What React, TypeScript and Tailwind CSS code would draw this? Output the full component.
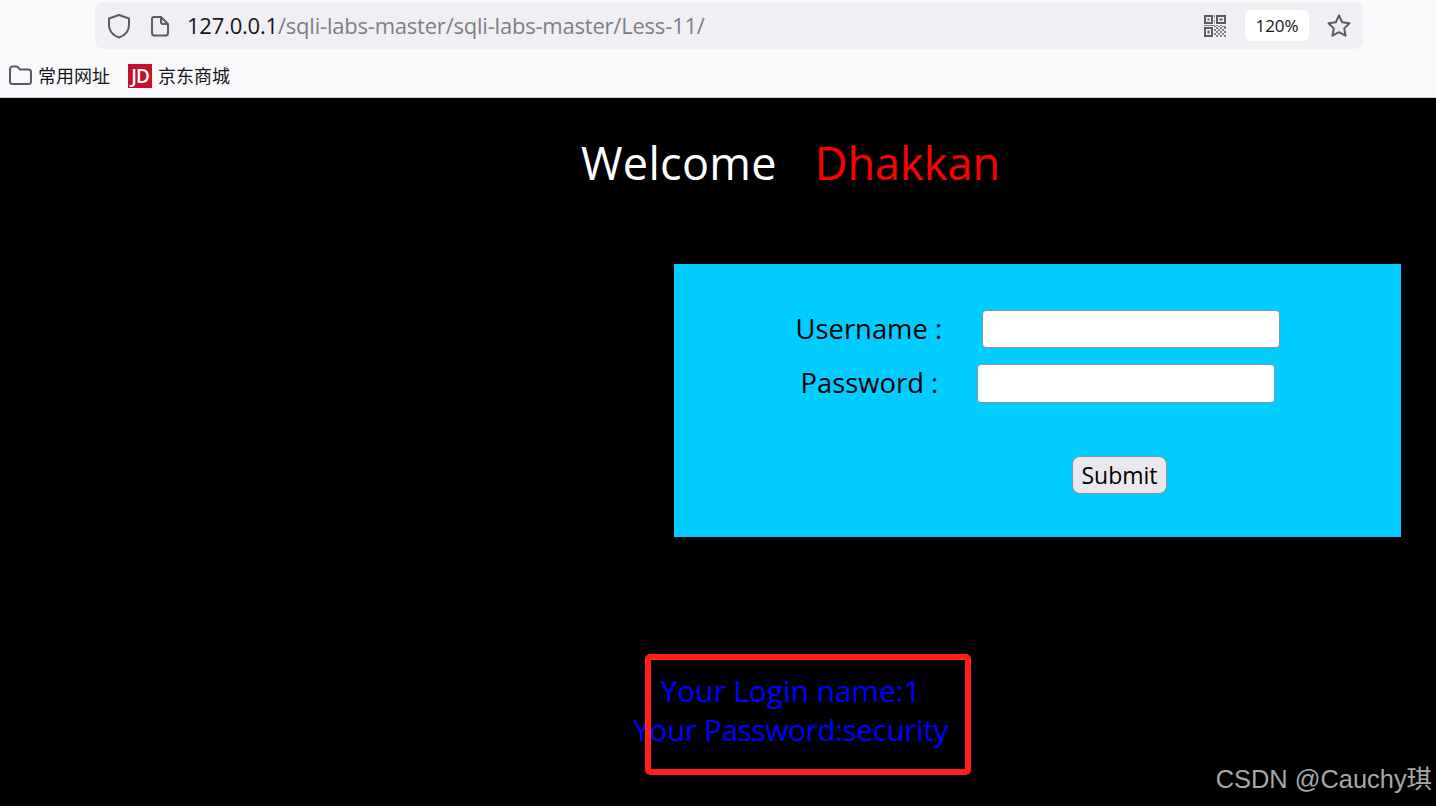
import React from 'react';

const uiFont = "font-['Open_Sans','Noto_Sans_CJK_SC',sans-serif]";

const QrIcon = () => (
  <svg width="22" height="22" viewBox="0 0 22 22" fill="#5b5b66">
    <path fillRule="evenodd" d="M0 0h9v9H0zM2 2v5h5V2zM12 0h10v9H12zM14 2v5h6V2zM0 12h9v10H0zM2 14v6h5v-6z" />
    <rect x="3.5" y="3.5" width="2" height="2" />
    <rect x="15.5" y="3.5" width="3" height="2" />
    <rect x="3.5" y="15.5" width="2" height="3" />
    <path d="M10 0h1v3h-1zM10 5h1v5H0v1h10v1h2v-2h2v2h2v-2h2v2h4v-1h-11zM12 12h2v2h-2zM16 12h2v2h-2zM20 12h2v2h-2zM14 14h2v2h-2zM18 14h2v2h-2zM12 16h2v2h-2zM16 16h2v2h-2zM20 16h2v2h-2zM10 14h2v2h-2zM10 18h2v2h-2zM14 18h2v2h-2zM18 18h2v2h-2zM12 20h2v2h-2zM16 20h2v2h-2zM20 20h2v2h-2z" opacity="0.75" />
  </svg>
);

const Toolbar = () => (
  <div className={`h-[98px] bg-[#f9f9fb] border-b border-[#c8c8c8] pt-[2px] ${uiFont}`}>
    <div className="ml-[95px] w-[1268px] h-[47px] bg-[#f0f0f4] rounded-lg flex items-center">
      <svg className="ml-[12px]" width="24" height="26" viewBox="0 0 24 26" fill="none" stroke="#5b5b66" strokeWidth="2">
        <path d="M12 2 L22 5.5 V12 C22 18 17.5 22.5 12 24.5 C6.5 22.5 2 18 2 12 V5.5 Z" strokeLinejoin="round" />
      </svg>
      <svg className="ml-[19px]" width="20" height="22" viewBox="0 0 20 22" fill="none" stroke="#5b5b66" strokeWidth="2">
        <path d="M4 2h7l7 7v9a2.5 2.5 0 0 1-2.5 2.5h-11A2.500 2.500 0 0 1 2 18V4a2 2 0 0 1 2-2z M11 2v5a2 2 0 0 0 2 2h5" strokeLinejoin="round" />
      </svg>
      <span className="ml-[17px] text-[22px] tracking-[-0.21px] text-[#15141a] whitespace-nowrap">
        127.0.0.1<span className="text-[#7e7e87]">/sqli-labs-master/sqli-labs-master/Less-11/</span>
      </span>
      <div className="ml-auto flex items-center">
        <QrIcon />
        <div className="ml-[19px] w-[64px] h-[31px] bg-white rounded-md flex items-center justify-center text-[17px] tracking-[-0.1px] text-[#15141a]">
          120%
        </div>
        <svg className="ml-[17px] mr-[11px]" width="26" height="26" viewBox="0 0 26 26" fill="none" stroke="#5b5b66" strokeWidth="2">
          <path d="M13 2.500l3.200 6.800 7.300 1-5.300 5.100 1.300 7.300-6.500-3.500-6.500 3.500 1.300-7.300-5.300-5.100 7.300-1z" strokeLinejoin="round" />
        </svg>
      </div>
    </div>
    <div className="flex items-center h-[24px] mt-[15px] text-[#15141a] text-[18px] whitespace-nowrap">
      <svg className="ml-[8px] -mt-[2px]" width="25" height="22" viewBox="0 0 25 22" fill="none" stroke="#5b5b66" strokeWidth="2">
        <path d="M2 5a2.500 2.500 0 0 1 2.500-2.500h4.500l3 3h8.500A2.500 2.500 0 0 1 23 8v9.500a2.500 2.500 0 0 1-2.500 2.500h-16A2.500 2.500 0 0 1 2 17.500z" strokeLinejoin="round" />
      </svg>
      <span className="ml-[5px]">常用网址</span>
      <div className="ml-[18px] w-[24px] h-[24px] bg-[#c8102e] flex items-center justify-center text-white font-semibold text-[19px] tracking-[-1px]">
        JD
      </div>
      <span className="ml-[6px]">京东商城</span>
    </div>
  </div>
);

const App = () => {
  return (
    <div className={`relative w-[1436px] h-[806px] overflow-hidden bg-black ${uiFont}`}>
      <Toolbar />

      <div className="pl-[145px] pt-[34px] h-[166px] text-center text-[45px] leading-[62px] whitespace-pre">
        <span className="text-white tracking-[0.3px]">Welcome</span>
        <span className="text-[#ff0000] ml-[38px]">Dhakkan</span>
      </div>

      <div className="ml-[674px] w-[727px] h-[273px] bg-[#00ccff] pt-[46px] text-[27.4px] text-black">
        <div className="flex items-center justify-center h-[38px]">
          <span className="w-[186px] whitespace-nowrap">Username :</span>
          <input className="w-[298px] h-[38px] bg-white border border-[#8f8f9d] rounded-[4px]" />
        </div>
        <div className="flex items-center justify-center h-[39px] mt-[16px]">
          <span className="w-[176px] -mt-[1px] whitespace-nowrap">Password :</span>
          <input className="w-[298px] h-[39px] bg-white border border-[#8f8f9d] rounded-[4px]" />
        </div>
        <button className="block ml-[398px] mt-[53px] w-[95px] h-[38px] bg-[#e9e9ed] border border-[#8f8f9d] rounded-[8px] text-[23px] leading-none">
          Submit
        </button>
      </div>

      <div className="pl-[145px] pt-[134px] text-center text-[#0000ff] text-[30px] leading-[39px] whitespace-nowrap">
        <div className="tracking-[-0.1px]">Your Login name:1</div>
        <div className="tracking-[-0.5px]">Your Password:security</div>
      </div>

      {/* annotation + watermark sit on top of the page */}
      <div className="absolute left-[645px] top-[654px] w-[326px] h-[121px] border-[6px] border-[#ff2015] rounded-[5px]" />
      <div className="absolute right-[4px] top-[762px] text-[25.4px] leading-[34px] text-[#a8a8a8] font-['Liberation_Sans','Noto_Sans_CJK_SC',sans-serif]">
        CSDN @Cauchy琪
      </div>
    </div>
  );
};

export default App;
